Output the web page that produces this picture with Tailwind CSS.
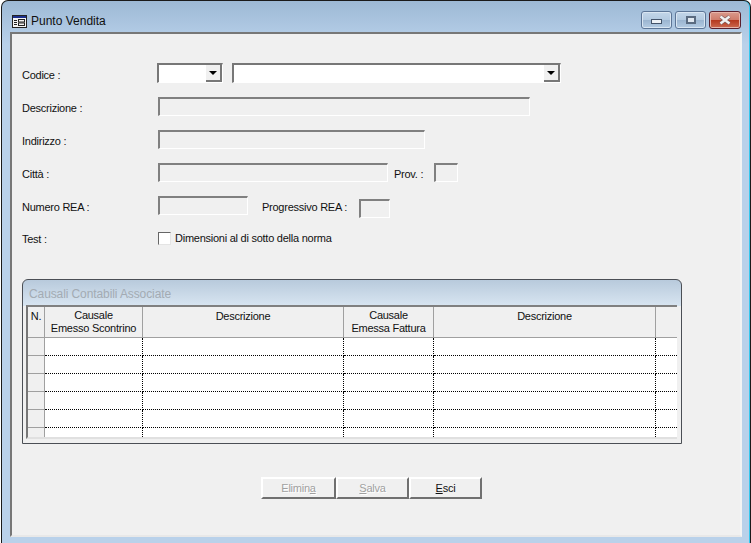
<!DOCTYPE html>
<html lang="it">
<head>
    <meta charset="UTF-8">
    <title>Punto Vendita</title>
    <script src="https://cdn.jsdelivr.net/npm/@tailwindcss/browser@4"></script>
</head>
<body class="w-[751px] h-[543px] overflow-hidden bg-white font-['Liberation_Sans',sans-serif] text-[11px] tracking-[-0.25px] leading-[14px] text-[#111]">
    <!-- Window frame -->
    <div class="w-[750px] h-[543px] ml-[1px] flex flex-col rounded-t-[7px] border-l border-t border-r border-[#1a1a1a] bg-[#b9d1ea] bg-gradient-to-b from-[#9db9d5] from-0% to-[#b9d1ea] to-[8%] shadow-[inset_-1px_0_0_#35c8ee]">
        <!-- Title bar -->
        <div class="h-[31px] shrink-0 flex pl-[10px] pr-[9px]">
            <svg class="mt-[14px]" width="15" height="13" viewBox="0 0 15 13">
                <rect x="0.5" y="0.5" width="14" height="12" fill="#f4f4f4" stroke="#222"/>
                <rect x="1" y="1" width="13" height="2" fill="#1c2f8c"/>
                <path d="M2 5.5h3M2 7.5h3M2 9.5h3" stroke="#222"/>
                <rect x="6.5" y="4.5" width="6" height="2.5" fill="none" stroke="#222"/>
                <rect x="6.5" y="8" width="6" height="2.5" fill="none" stroke="#222"/>
            </svg>
            <span class="ml-[4px] mt-[13px] text-[12px] tracking-normal text-[#101010]">Punto Vendita</span>
            <div class="ml-auto flex gap-[3px] mt-[10px] h-[18px]">
                <div class="w-[31px] h-[18px] rounded-[3px] border border-[#5c7596] flex items-center justify-center bg-[linear-gradient(#c3d6e9_0%,#b3cae0_48%,#9ab4cf_50%,#b4cce3_100%)] shadow-[inset_0_0_0_1px_#d9e6f2]">
                    <div class="w-[11px] h-[5px] mt-[3px] bg-[#eef2f6] border border-[#44546a]"></div>
                </div>
                <div class="w-[31px] h-[18px] rounded-[3px] border border-[#5c7596] flex items-center justify-center bg-[linear-gradient(#c3d6e9_0%,#b3cae0_48%,#9ab4cf_50%,#b4cce3_100%)] shadow-[inset_0_0_0_1px_#d9e6f2]">
                    <div class="w-[10px] h-[8px] bg-[#dfe7ef] border-2 border-[#5a6b80]"></div>
                </div>
                <div class="w-[32px] h-[18px] rounded-[3px] border border-[#5a1f2c] flex items-center justify-center bg-[linear-gradient(#d99a8c_0%,#cf7c6b_48%,#b5391f_52%,#cc6a50_100%)] shadow-[inset_0_0_0_1px_#e6b5aa]">
                    <svg width="14" height="10" viewBox="0 0 14 10">
                        <path d="M2.5 1.5L11.5 8.5M11.5 1.5L2.5 8.5" stroke="#7a5a5a" stroke-width="3.6"/>
                        <path d="M2.5 1.5L11.5 8.5M11.5 1.5L2.5 8.5" stroke="#f2f2f2" stroke-width="2.4"/>
                    </svg>
                </div>
            </div>
        </div>

        <!-- Client area -->
        <div class="w-[732px] h-[505px] ml-[8px] shrink-0 bg-[#f0f0f0] border-l-2 border-t-2 border-l-[#777] border-t-[#777] border-r-2 border-b-2 border-r-[#f4f4f4] border-b-[#e8e8e8] pl-[10px]">
            <div class="flex items-start h-[20px] mt-[29px]">
                <label class="w-[135px] mt-[5px]">Codice :</label>
                <div class="w-[66px] h-[20px] flex justify-end bg-white border-l-2 border-t-2 border-l-[#777] border-t-[#777] border-r border-b border-r-white border-b-white">
                    <div class="w-[16px] h-[17px] flex items-center justify-center bg-[#f0f0f0] border-r-2 border-b-2 border-r-[#777] border-b-[#777]">
                        <div class="w-0 h-0 border-l-[4px] border-r-[4px] border-t-[4px] border-l-transparent border-r-transparent border-t-black"></div>
                    </div>
                </div>
                <div class="w-[329px] h-[20px] ml-[9px] flex justify-end bg-white border-l-2 border-t-2 border-l-[#777] border-t-[#777] border-r border-b border-r-white border-b-white">
                    <div class="w-[16px] h-[17px] flex items-center justify-center bg-[#f0f0f0] border-r-2 border-b-2 border-r-[#777] border-b-[#777]">
                        <div class="w-0 h-0 border-l-[4px] border-r-[4px] border-t-[4px] border-l-transparent border-r-transparent border-t-black"></div>
                    </div>
                </div>
            </div>

            <div class="flex items-start h-[19px] mt-[14px]">
                <label class="w-[136px] mt-[4px]">Descrizione :</label>
                <div class="w-[372px] h-[19px] border-l-2 border-t-2 border-l-[#808080] border-t-[#808080] border-r border-b border-r-white border-b-white"></div>
            </div>

            <div class="flex items-start h-[19px] mt-[14px]">
                <label class="w-[136px] mt-[4px]">Indirizzo :</label>
                <div class="w-[267px] h-[19px] border-l-2 border-t-2 border-l-[#808080] border-t-[#808080] border-r border-b border-r-white border-b-white"></div>
            </div>

            <div class="flex items-start h-[19px] mt-[14px]">
                <label class="w-[136px] mt-[4px]">Città :</label>
                <div class="w-[230px] h-[19px] border-l-2 border-t-2 border-l-[#808080] border-t-[#808080] border-r border-b border-r-white border-b-white"></div>
                <label class="ml-[6px] mt-[4px] w-[40px]">Prov. :</label>
                <div class="w-[24px] h-[19px] border-l-2 border-t-2 border-l-[#808080] border-t-[#808080] border-r border-b border-r-white border-b-white"></div>
            </div>

            <div class="flex items-start h-[19px] mt-[14px]">
                <label class="w-[136px] mt-[4px]">Numero REA :</label>
                <div class="w-[90px] h-[19px] border-l-2 border-t-2 border-l-[#808080] border-t-[#808080] border-r border-b border-r-white border-b-white"></div>
                <label class="ml-[14px] mt-[4px] w-[97px] whitespace-nowrap">Progressivo REA :</label>
                <div class="w-[31px] h-[19px] mt-[3px] border-l-2 border-t-2 border-l-[#808080] border-t-[#808080] border-r border-b border-r-white border-b-white"></div>
            </div>

            <div class="flex items-start h-[14px] mt-[17px]">
                <label class="w-[136px]">Test :</label>
                <div class="w-[13px] h-[13px] bg-white border-l border-t border-l-[#666] border-t-[#666] border-r border-b border-r-[#e4e4e4] border-b-[#e4e4e4]"></div>
                <span class="ml-[4px] -mt-[1px]">Dimensioni al di sotto della norma</span>
            </div>

            <!-- Group box -->
            <div class="w-[660px] h-[165px] mt-[33px] flex flex-col rounded-t-[6px] bg-[linear-gradient(#b8cadc_0px,#d8e5f1_26px,#f0f0f0_26px)] border border-[#4b4f55] pl-[3px] pr-[3px]">
                <div class="h-[25px] shrink-0 pl-[3px] pt-[7px] text-[12px] tracking-[-0.1px] text-[#a3abb3]">Causali Contabili Associate</div>
                <div class="w-[651px] h-[134px] flex flex-col bg-white border-l-2 border-t-2 border-l-[#777] border-t-[#808080] border-b-2 border-b-[#e0e0e0]">
                    <!-- Header row -->
                    <div class="h-[31px] shrink-0 flex text-center bg-[#f0f0f0] border-b border-[#a0a0a0]">
                        <div class="w-[17px] border-r border-[#a0a0a0] pt-[2px]">N.</div>
                        <div class="w-[98px] border-r border-[#a0a0a0] leading-[13px] pt-[2px]">Causale<br>Emesso Scontrino</div>
                        <div class="w-[201px] border-r border-[#a0a0a0] pt-[2px]">Descrizione</div>
                        <div class="w-[90px] border-r border-[#a0a0a0] leading-[13px] pt-[2px]">Causale<br>Emessa Fattura</div>
                        <div class="w-[222px] border-r border-[#a0a0a0] pt-[2px]">Descrizione</div>
                        <div class="flex-1"></div>
                    </div>
                    <!-- Rows -->
                    <div class="h-[18px] shrink-0 flex">
                        <div class="w-[17px] bg-[#f0f0f0] border-r border-b border-[#a0a0a0]"></div>
                        <div class="w-[98px] border-r border-b border-dotted border-black"></div>
                        <div class="w-[201px] border-r border-b border-dotted border-black"></div>
                        <div class="w-[90px] border-r border-b border-dotted border-black"></div>
                        <div class="w-[222px] border-r border-b border-dotted border-black"></div>
                        <div class="flex-1 border-b border-dotted border-black"></div>
                    </div>
                    <div class="h-[18px] shrink-0 flex">
                        <div class="w-[17px] bg-[#f0f0f0] border-r border-b border-[#a0a0a0]"></div>
                        <div class="w-[98px] border-r border-b border-dotted border-black"></div>
                        <div class="w-[201px] border-r border-b border-dotted border-black"></div>
                        <div class="w-[90px] border-r border-b border-dotted border-black"></div>
                        <div class="w-[222px] border-r border-b border-dotted border-black"></div>
                        <div class="flex-1 border-b border-dotted border-black"></div>
                    </div>
                    <div class="h-[18px] shrink-0 flex">
                        <div class="w-[17px] bg-[#f0f0f0] border-r border-b border-[#a0a0a0]"></div>
                        <div class="w-[98px] border-r border-b border-dotted border-black"></div>
                        <div class="w-[201px] border-r border-b border-dotted border-black"></div>
                        <div class="w-[90px] border-r border-b border-dotted border-black"></div>
                        <div class="w-[222px] border-r border-b border-dotted border-black"></div>
                        <div class="flex-1 border-b border-dotted border-black"></div>
                    </div>
                    <div class="h-[18px] shrink-0 flex">
                        <div class="w-[17px] bg-[#f0f0f0] border-r border-b border-[#a0a0a0]"></div>
                        <div class="w-[98px] border-r border-b border-dotted border-black"></div>
                        <div class="w-[201px] border-r border-b border-dotted border-black"></div>
                        <div class="w-[90px] border-r border-b border-dotted border-black"></div>
                        <div class="w-[222px] border-r border-b border-dotted border-black"></div>
                        <div class="flex-1 border-b border-dotted border-black"></div>
                    </div>
                    <div class="h-[18px] shrink-0 flex">
                        <div class="w-[17px] bg-[#f0f0f0] border-r border-b border-[#a0a0a0]"></div>
                        <div class="w-[98px] border-r border-b border-dotted border-black"></div>
                        <div class="w-[201px] border-r border-b border-dotted border-black"></div>
                        <div class="w-[90px] border-r border-b border-dotted border-black"></div>
                        <div class="w-[222px] border-r border-b border-dotted border-black"></div>
                        <div class="flex-1 border-b border-dotted border-black"></div>
                    </div>
                    <div class="flex-1 flex">
                        <div class="w-[17px] bg-[#f0f0f0] border-r border-[#a0a0a0]"></div>
                        <div class="w-[98px] border-r border-dotted border-black"></div>
                        <div class="w-[201px] border-r border-dotted border-black"></div>
                        <div class="w-[90px] border-r border-dotted border-black"></div>
                        <div class="w-[222px] border-r border-dotted border-black"></div>
                    </div>
                </div>
            </div>

            <!-- Buttons -->
            <div class="flex ml-[239px] mt-[33px] h-[22px]">
                <button class="w-[75px] h-[22px] bg-[#f0f0f0] border-l-2 border-t-2 border-l-white border-t-white border-r-2 border-b-2 border-r-[#707070] border-b-[#707070] text-[#a0a0a0] [text-shadow:1px_1px_0_#fff]">Elimin<u>a</u></button>
                <button class="w-[73px] h-[22px] bg-[#f0f0f0] border-l-2 border-t-2 border-l-white border-t-white border-r-2 border-b-2 border-r-[#707070] border-b-[#707070] text-[#a0a0a0] [text-shadow:1px_1px_0_#fff]"><u>S</u>alva</button>
                <button class="w-[73px] h-[22px] bg-[#f0f0f0] border-l-2 border-t-2 border-l-white border-t-white border-r-2 border-b-2 border-r-[#707070] border-b-[#707070] text-[#111]"><u>E</u>sci</button>
            </div>
        </div>
    </div>
</body>
</html>
